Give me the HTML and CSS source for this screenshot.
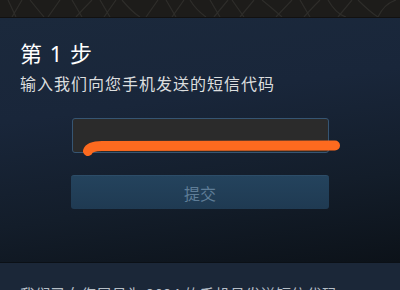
FILE: index.html
```html
<!DOCTYPE html>
<html>
<head>
<meta charset="utf-8">
<link rel="stylesheet" href="styles.css">
</head>
<body>
<div class="topbar">
  <svg class="pattern" width="400" height="17" viewBox="0 0 400 17">
    <g fill="none" stroke="#2e2d2a" stroke-width="1.2">
      <path d="M8 0 L16 17 M22 0 L12 17"/>
      <path d="M30 0 Q38 10 44 17 M60 0 L48 17"/>
      <path d="M72 0 L82 17 M92 0 Q84 8 76 17"/>
      <path d="M100 0 L110 17 M116 0 L104 17"/>
      <path d="M122 0 Q132 12 140 17 M158 0 L146 17"/>
      <path d="M166 0 L176 17 M184 0 L172 17 M190 0 Q196 10 206 17"/>
      <path d="M210 0 L220 17 M228 0 L214 17"/>
      <path d="M232 0 L244 17 M254 0 L240 17"/>
      <path d="M262 0 Q272 8 282 17 M292 0 L276 17"/>
      <path d="M300 0 L310 17 M320 0 Q310 10 304 17"/>
      <path d="M328 0 Q336 14 346 17 M352 0 L338 17"/>
      <path d="M358 0 Q370 12 378 17 M396 0 Q384 4 378 17"/>
    </g>
  </svg>
</div>
<div class="panel">
  <h1 class="title">第 1 步</h1>
  <p class="subtitle">输入我们向您手机发送的短信代码</p>
  <div class="field">
    <div class="input"></div>
    <svg class="scribble" width="270" height="16" viewBox="0 0 270 16">
      <path d="M16 11 Q18 6 30 6 L263 5.5" fill="none" stroke="#fd6a1f" stroke-width="10" stroke-linecap="round"/>
    </svg>
  </div>
  <div class="button">提交</div>
</div>
<div class="footer">
  <p class="note">我们已向您尾号为 2024 的手机号发送短信代码</p>
</div>
</body>
</html>
```
FILE: styles.css
```css
html, body {
  margin: 0;
  padding: 0;
  width: 400px;
  height: 290px;
  overflow: hidden;
  background: #1b2738;
  font-family: "Noto Sans CJK SC", "Noto Sans", sans-serif;
}
.topbar {
  height: 17px;
  background: #1d1c1a;
  border-bottom: 1px solid #121110;
  overflow: hidden;
}
.pattern {
  display: block;
}
.panel {
  height: 245px;
  background: linear-gradient(172deg, #1b293c 0%, #19263a 35%, #131d2a 70%, #0c1219 100%);
  padding: 0 0 0 20px;
  box-sizing: border-box;
  border-bottom: 1px solid #0b1016;
  display: flex;
  flex-direction: column;
}
.title {
  margin: 21px 0 0 0;
  font-family: "Noto Sans", "Noto Sans CJK SC", sans-serif;
  font-size: 22px;
  line-height: 28px;
  font-weight: 400;
  word-spacing: 2px;
  color: #ffffff;
}
.subtitle {
  margin: 6px 0 0 0;
  font-size: 16px;
  line-height: 20px;
  letter-spacing: 1px;
  color: #dcdedf;
}
.field {
  position: relative;
  margin: 25px 0 0 52px;
  width: 257px;
  height: 35px;
}
.input {
  box-sizing: border-box;
  width: 257px;
  height: 35px;
  background: #2b2b2b;
  border: 1px solid #365572;
  border-radius: 3px;
}
.scribble {
  position: absolute;
  left: 0;
  top: 22px;
}
.button {
  margin: 22px 0 0 51px;
  width: 258px;
  height: 34px;
  box-sizing: border-box;
  border-radius: 3px;
  background: linear-gradient(to bottom, #24435d, #1f3a52);
  border-top: 1px solid #2d4d68;
  color: #5f7d97;
  font-size: 16px;
  display: flex;
  align-items: center;
  justify-content: center;
}
.footer {
  padding: 21px 0 0 20px;
}
.note {
  margin: 0;
  font-size: 15px;
  line-height: 20px;
  letter-spacing: 0.3px;
  white-space: nowrap;
  color: #b6bec6;
}
```
